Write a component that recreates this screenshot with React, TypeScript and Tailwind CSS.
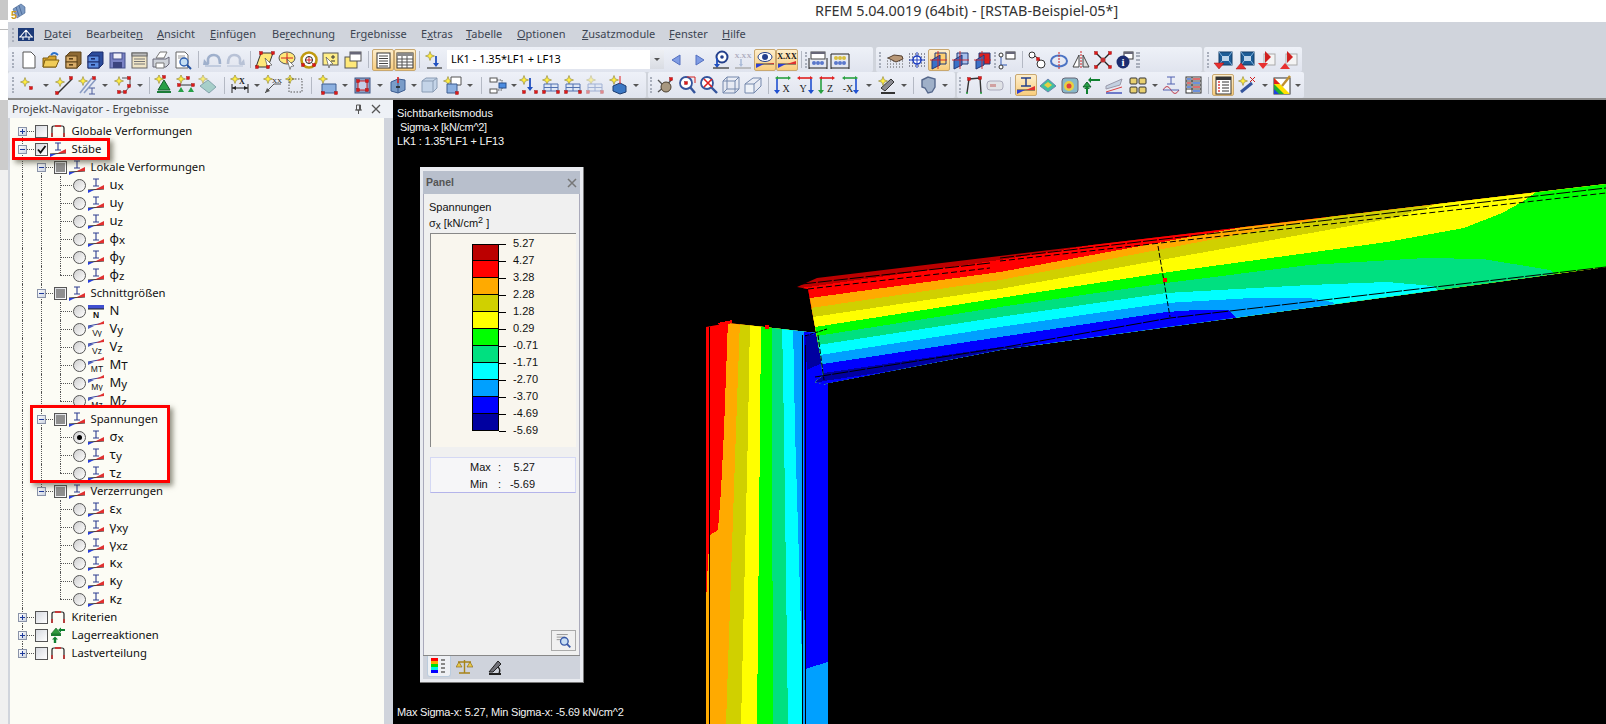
import type { ReactNode } from 'react';

const Sv = ({ c = 'w-[20px] h-[20px]', v = '0 0 20 20', children }: { c?: string; v?: string; children: ReactNode }) => (
  <svg viewBox={v} className={c} fill="none">
    {children}
  </svg>
);

// small bits shared by the toolbar drawings
const St = ({ x, y }: { x: number; y: number }) => (
  <path d={`M${x} ${y - 4.5}l1.2 3.3 3.3 1.2-3.3 1.2-1.2 3.3-1.2-3.3-3.3-1.2 3.3-1.2z`} fill="#ffee44" stroke="#8c8030" strokeWidth=".6" />
);
const Rd = ({ x, y }: { x: number; y: number }) => <rect x={x - 1.5} y={y - 1.5} width="3" height="3" fill="#e01818" stroke="#901010" strokeWidth=".4" />;
const Cab = ({ a, b, d }: { a: string; b: string; d: string }) => (
  <>
    <path d="M3 6l4-4h11v12l-4 4H3z" fill={a} stroke={d} />
    <rect x="3" y="6" width="11" height="6" fill={b} stroke={d} />
    <rect x="3" y="12" width="11" height="6" fill={b} stroke={d} />
    <rect x="6" y="8" width="4" height="1.6" fill={d} />
    <rect x="6" y="14" width="4" height="1.6" fill={d} />
  </>
);
// view direction icon: coloured arrow over the top, one vertical arrow, axis letter beside it
const Axis = ({ t, top, c, side }: { t: string; top: string; c: string; side: 'l' | 'r' }) => {
  const x = side === 'l' ? 4 : 16;
  return (
    <>
      <path d="M4 3h12" stroke={top} strokeWidth="1.6" />
      <path d="M2 3l3-2v4zM18 3l-3-2v4z" fill={top} />
      <path d={`M${x} 4v12`} stroke={c} strokeWidth="1.6" />
      <path d={`M${x} 19l-3-4h6z`} fill={c} />
      <text x={side === 'l' ? 13 : 8} y="17" textAnchor="middle" fontSize="10" fontFamily="Liberation Serif, serif" fill="#222">{t}</text>
    </>
  );
};
const Plane = ({ f }: { f: string }) => (
  <>
    <path d="M6 3h11v11H6z" fill={f} stroke="#203878" />
    <path d="M3 10l8-5v10l-8 4z" fill="#3a70c8" stroke="#203878" />
    <path d="M9 1v18M1 10h17" stroke="#d02020" strokeWidth=".9" />
  </>
);
const Blue = () => (
  <>
    <rect x="6" y="2" width="13" height="13" fill="#1c5c96" stroke="#123c66" />
    <rect x="9" y="6" width="7" height="5" fill="#bcd4ea" />
    <path d="M6 2l3 4M19 2l-3 4M6 15l3-4M19 15l-3-4" stroke="#7fb0dc" />
  </>
);
const House = ({ o = 1 }: { o?: number }) => (
  <g opacity={o}>
    <St x={6} y={5} />
    <path d="M3 9h14v7H3z" fill="#dfe7f5" stroke="#5070b0" />
    <path d="M3 12.5h14M10 9v7" stroke="#5070b0" />
    <Rd x={3} y={17} />
    <Rd x={17} y={17} />
  </g>
);

const ICONS: Record<string, ReactNode> = {
  new: <path d="M4 2h8l4 4v12H4z" fill="#fff" stroke="#555" />,
  open: (
    <>
      <path d="M2 8h5l1-2h7v11H2z" fill="#d8a52a" stroke="#7c5c10" />
      <path d="M4 10h14l-3 7H2z" fill="#f0cc58" stroke="#7c5c10" />
      <path d="M10 5q3-4 7 0" stroke="#2a70c8" strokeWidth="1.8" />
    </>
  ),
  cabA: <Cab a="#8e6a34" b="#d8ac68" d="#5c4218" />,
  cabB: <Cab a="#2c4c9c" b="#5c8ce0" d="#1c2c6c" />,
  save: (
    <>
      <rect x="3" y="3" width="15" height="15" fill="#7a82c4" stroke="#44508c" />
      <rect x="6" y="3" width="9" height="6" fill="#f0f0f8" stroke="#44508c" />
      <rect x="6" y="12" width="9" height="6" fill="#3c4480" />
    </>
  ),
  props: (
    <>
      <rect x="3" y="3" width="15" height="15" fill="#efe4c6" stroke="#666" />
      <rect x="3" y="3" width="15" height="3" fill="#bbb" stroke="#666" />
      <path d="M5 9h11M5 11.5h11M5 14h11" stroke="#777" />
    </>
  ),
  print: (
    <>
      <path d="M5 8l4-6h7l-3 6z" fill="#fff" stroke="#777" />
      <path d="M2 9h13l3-2v7l-3 3H2z" fill="#cfd3da" stroke="#667" />
      <path d="M5 13h8v5H5z" fill="#fff" stroke="#777" />
    </>
  ),
  preview: (
    <>
      <path d="M3 2h9l3 3v13H3z" fill="#fff" stroke="#666" />
      <path d="M5 6h7M5 8h7" stroke="#999" />
      <circle cx="11" cy="12" r="4" fill="#c4def4" stroke="#3060b0" strokeWidth="1.4" />
      <path d="M14 15l4 4" stroke="#2050a0" strokeWidth="2" />
    </>
  ),
  undo: (
    <>
      <path d="M5 14V9q1-4 6-4 6 0 6 9" stroke="#9fb0cc" strokeWidth="2.6" />
      <path d="M1 9l5 6h-6z" fill="#9fb0cc" />
      <path d="M2 16h16" stroke="#9fb0cc" />
    </>
  ),
  redo: (
    <>
      <path d="M15 14V9q-1-4-6-4-6 0-6 9" stroke="#b8c2d6" strokeWidth="2.6" />
      <path d="M19 9l-5 6h6z" fill="#b8c2d6" />
      <path d="M2 16h16" stroke="#b8c2d6" />
    </>
  ),
  para: (
    <>
      <path d="M6 3h12l-5 14H1z" fill="#ffe97a" stroke="#333" />
      <path d="M10 8l7 7-3 .5-1 3z" fill="#fff" stroke="#555" strokeWidth=".7" />
      <Rd x={6} y={3} />
      <Rd x={18} y={3} />
      <Rd x={2} y={17} />
      <Rd x={13} y={17} />
    </>
  ),
  sel1: (
    <>
      <ellipse cx="10" cy="8" rx="8" ry="6" fill="#ffe97a" stroke="#555" />
      <path d="M10 3v10M4 8h12" stroke="#d02020" />
      <path d="M10 9l7 7-3 .4-1 3z" fill="#fff" stroke="#555" strokeWidth=".7" />
    </>
  ),
  sel2: (
    <>
      <circle cx="10" cy="10" r="7.5" fill="#fff" stroke="#c09a10" strokeWidth="2.6" />
      <circle cx="10" cy="10" r="3.5" fill="#fff" stroke="#222" />
      <path d="M10 7v6M7 10h6" stroke="#d02020" />
      <Rd x={4} y={15} />
      <Rd x={15} y={15} />
    </>
  ),
  sel3: (
    <>
      <rect x="2" y="3" width="15" height="12" fill="#ffee88" stroke="#555" />
      <path d="M12 5v4M10 7h4M10 11h4" stroke="#333" />
      <path d="M5 7l7 7-3 .4-1 3.6z" fill="#fff" stroke="#555" strokeWidth=".7" />
    </>
  ),
  win: (
    <>
      <rect x="2" y="7" width="12" height="11" fill="#ffe97a" stroke="#555" />
      <rect x="7" y="2" width="11" height="9" fill="#fff" stroke="#555" />
      <rect x="7" y="2" width="11" height="2.5" fill="#667" />
    </>
  ),
  tog1: (
    <>
      <rect x="4" y="3" width="13" height="15" fill="#fff" stroke="#333" />
      <path d="M6 6h9M6 8.5h9M6 11h9M6 13.5h9M6 16h9" stroke="#444" />
    </>
  ),
  tog2: (
    <>
      <rect x="2" y="3" width="16" height="15" fill="#fff" stroke="#333" />
      <rect x="2" y="3" width="16" height="3" fill="#8a8a8a" />
      <path d="M2 9h16M2 12h16M2 15h16M7 6v12M12 6v12" stroke="#555" />
    </>
  ),
  load: (
    <>
      <St x={6} y={6} />
      <path d="M12 6v9" stroke="#2050c0" strokeWidth="1.8" />
      <path d="M12 17l-3-4h6z" fill="#2050c0" />
      <path d="M3 18h15" stroke="#555" strokeWidth="1.4" />
    </>
  ),
  prevA: <path d="M5 10l8-5v10z" fill="#7f9ce4" stroke="#5470c0" />,
  nextA: <path d="M15 10l-8-5v10z" fill="#7f9ce4" stroke="#5470c0" />,
  pin: (
    <>
      <circle cx="11" cy="7" r="5.5" fill="#fff" stroke="#24408c" strokeWidth="2" />
      <circle cx="11" cy="7" r="1.8" fill="#24408c" />
      <path d="M6 8v8" stroke="#2050c0" strokeWidth="1.8" />
      <path d="M6 18l-3-4h6z" fill="#2050c0" />
      <path d="M2 18h16" stroke="#444" strokeWidth="1.4" />
    </>
  ),
  xxx: (
    <>
      <text x="10" y="8" textAnchor="middle" fontSize="7" fontWeight="700" fontFamily="Liberation Serif, serif" fill="#aab">X.XX</text>
      <path d="M8 9v6" stroke="#aabbd8" strokeWidth="1.6" />
      <path d="M8 17l-2-3h4z" fill="#aabbd8" />
      <path d="M2 18h16" stroke="#aaa" strokeWidth="1.4" />
    </>
  ),
  eye: (
    <>
      <ellipse cx="10" cy="7" rx="7" ry="4.5" fill="#fff" stroke="#24408c" />
      <circle cx="10" cy="7" r="3" fill="#24408c" />
      <path d="M1 14h18" stroke="#333" />
      <path d="M1 14h18v-1l-8 1z" fill="#e03030" />
      <path d="M1 14h8l-8 4z" fill="#3040d0" />
    </>
  ),
  xxxA: (
    <>
      <text x="10" y="9" textAnchor="middle" fontSize="8" fontWeight="700" fontFamily="Liberation Serif, serif" fill="#111">X.XX</text>
      <path d="M1 14h18" stroke="#333" />
      <path d="M10 14l9-3v3z" fill="#e03030" />
      <path d="M1 14h8l-8 4z" fill="#3040d0" />
    </>
  ),
  glasses: (
    <>
      <path d="M2 6l5 8M18 4l-3 10" stroke="#667a9c" strokeWidth="1.6" />
      <circle cx="6" cy="12" r="3.6" fill="#9fb4d0" stroke="#4c5f80" />
      <circle cx="14" cy="12" r="3.6" fill="#9fb4d0" stroke="#4c5f80" />
    </>
  ),
  abac1: (
    <>
      <rect x="3" y="2" width="14" height="7" fill="#fff" stroke="#444" />
      <rect x="3" y="2" width="14" height="2" fill="#667" />
      <path d="M1 8v11M19 8v11M1 18h18" stroke="#222" />
      <circle cx="6" cy="13" r="2" fill="#5a78cc" />
      <circle cx="10" cy="13" r="2" fill="#5a78cc" />
      <circle cx="14" cy="13" r="2" fill="#5a78cc" />
    </>
  ),
  abac2: (
    <>
      <path d="M1 4v15M19 4v15M1 18h18M1 4h18" stroke="#222" />
      <circle cx="6" cy="8" r="2" fill="#d8c040" />
      <circle cx="10" cy="8" r="2" fill="#d8c040" />
      <circle cx="14" cy="8" r="2" fill="#d8c040" />
      <circle cx="6" cy="13" r="2" fill="#5a78cc" />
      <circle cx="10" cy="13" r="2" fill="#5a78cc" />
      <circle cx="14" cy="13" r="2" fill="#5a78cc" />
    </>
  ),
  hand: (
    <>
      <path d="M2 8h16M2 11h16M2 14h16M2 17h16" stroke="#555" strokeDasharray="1 2" />
      <path d="M3 8l6-3 8 1 1 3-7 3z" fill="#b89878" stroke="#554030" />
    </>
  ),
  dots: (
    <>
      <path d="M2 4h16M2 7h16M2 10h16M2 13h16M2 16h16" stroke="#334" strokeDasharray="1 2" />
      <circle cx="10" cy="10" r="4" fill="#fff" stroke="#2040c0" strokeWidth="1.6" />
      <path d="M10 2v16M2 10h16" stroke="#2040c0" />
    </>
  ),
  act: <Plane f="#ffd070" />,
  pl2: <Plane f="#a8c0ec" />,
  pl3: <Plane f="#e02020" />,
  grid: (
    <>
      <path d="M4 18V8l5-5h7v15z" fill="#dfe7f5" stroke="#8a9cc0" />
      <path d="M4 12h12M4 15h12M8 6v12M12 4v14" stroke="#8a9cc0" />
      <circle cx="9" cy="11" r="1" fill="#d02020" />
      <circle cx="13" cy="14" r="1" fill="#d02020" />
    </>
  ),
  flow: (
    <>
      <rect x="9" y="2" width="9" height="7" fill="#fff" stroke="#333" />
      <rect x="9" y="2" width="9" height="2" fill="#667" />
      <path d="M4 7v8h6" stroke="#6a86c8" strokeWidth="1.4" />
      <circle cx="4" cy="5" r="2" fill="#fff" stroke="#333" />
      <circle cx="4" cy="17" r="2" fill="#fff" stroke="#333" />
    </>
  ),
  nodes: (
    <>
      <circle cx="5" cy="5" r="3" fill="#fff" stroke="#333" />
      <circle cx="14" cy="14" r="4" fill="#fff" stroke="#333" />
      <path d="M8 6l5 4" stroke="#333" />
      <Rd x={11} y={9} />
    </>
  ),
  rot: (
    <>
      <ellipse cx="10" cy="11" rx="8" ry="5.5" stroke="#4c74c4" strokeWidth="2" />
      <path d="M10 2v17" stroke="#d02020" strokeDasharray="2 1" />
    </>
  ),
  mirror: (
    <>
      <path d="M8 5v12H2z" fill="#fff" stroke="#444" />
      <path d="M12 5v12h6z" fill="#ddd" stroke="#444" />
      <path d="M10 1v18" stroke="#d02020" strokeDasharray="2 1" />
    </>
  ),
  cross: (
    <>
      <path d="M3 3l14 14M17 3L3 17" stroke="#222" strokeWidth="1.4" />
      <circle cx="10" cy="10" r="2.5" fill="#c03030" />
      <Rd x={3} y={3} />
      <Rd x={17} y={3} />
      <Rd x={3} y={17} />
      <Rd x={17} y={17} />
    </>
  ),
  info: (
    <>
      <rect x="9" y="2" width="9" height="7" fill="#fff" stroke="#333" />
      <rect x="9" y="2" width="9" height="2" fill="#667" />
      <circle cx="8" cy="12" r="6.5" fill="#1c2c70" />
      <text x="8" y="16" textAnchor="middle" fontSize="11" fontWeight="700" fontFamily="Liberation Serif, serif" fill="#fff">i</text>
    </>
  ),
  geard: (
    <>
      <rect x="3" y="3" width="15" height="15" fill="#efe4c6" stroke="#555" />
      <rect x="3" y="3" width="6" height="3" fill="#bbb" stroke="#555" />
      <circle cx="10.5" cy="11" r="4" fill="#3c64a8" stroke="#1c2c60" strokeWidth="1.4" />
      <circle cx="10.5" cy="11" r="1.4" fill="#fff" />
    </>
  ),
  gears: (
    <>
      <circle cx="6" cy="11" r="3" fill="#fff" stroke="#3050a0" strokeWidth="2" />
      <circle cx="14" cy="7" r="3" fill="#fff" stroke="#3050a0" strokeWidth="2" />
      <circle cx="12" cy="15" r="2.4" fill="#fff" stroke="#3050a0" strokeWidth="1.8" />
    </>
  ),
  dn1: (
    <>
      <Blue />
      <path d="M1 13h10l-5 6z" fill="#e83030" stroke="#a01010" strokeWidth=".5" />
    </>
  ),
  dn2: (
    <>
      <Blue />
      <path d="M1 19h10l-5-6z" fill="#e83030" stroke="#a01010" strokeWidth=".5" />
    </>
  ),
  flag1: (
    <>
      <rect x="7" y="4" width="11" height="11" fill="#f4f4f4" stroke="#aaa" />
      <path d="M8 1v12l6-6z" fill="#d02020" />
      <path d="M1 13h10l-5 6z" fill="#e83030" />
    </>
  ),
  flag2: (
    <>
      <rect x="7" y="4" width="11" height="11" fill="#f4f4f4" stroke="#aaa" />
      <path d="M8 1v12l6-6z" fill="#d02020" />
      <path d="M1 19h10l-5-6z" fill="#e83030" />
    </>
  ),
  s1: (
    <>
      <St x={7} y={7} />
      <Rd x={13} y={13} />
    </>
  ),
  s2: (
    <>
      <St x={6} y={7} />
      <path d="M3 19L18 4" stroke="#333" strokeWidth="1.4" />
      <Rd x={17} y={3} />
      <Rd x={3} y={18} />
    </>
  ),
  s3: (
    <>
      <St x={5} y={6} />
      <path d="M2 18L14 3M6 18L18 4" stroke="#8a9cc4" strokeWidth="1.6" />
      <Rd x={16} y={3} />
      <path d="M11 13h6M14 13v6M11 19h6" stroke="#4c5c9c" />
    </>
  ),
  s4: (
    <>
      <St x={6} y={6} />
      <path d="M9 3h8v8l-5 6H6" stroke="#555" />
      <Rd x={16} y={3} />
      <Rd x={16} y={11} />
      <Rd x={12} y={17} />
      <Rd x={6} y={17} />
    </>
  ),
  s5: (
    <>
      <Rd x={10} y={2} />
      <St x={5} y={4} />
      <path d="M10 5l6 10H4z" fill="#28a048" stroke="#14602c" />
      <path d="M3 16h14v2H3z" fill="#1c7c38" />
    </>
  ),
  s6: (
    <>
      <St x={5} y={4} />
      <Rd x={12} y={3} />
      <path d="M3 10h14" stroke="#333" />
      <Rd x={3} y={10} />
      <Rd x={17} y={10} />
      <path d="M5 12l3 5H2zM15 12l3 5h-6z" fill="#28a048" />
    </>
  ),
  s7: (
    <g opacity=".7">
      <St x={5} y={4} />
      <path d="M2 11l8-6 8 7-7 6z" fill="#8cc4b8" stroke="#5c8890" />
    </g>
  ),
  dim: (
    <>
      <St x={5} y={4} />
      <path d="M2 9v9M18 9v9M2 13h16" stroke="#222" />
      <path d="M2 13l4-2v4zM18 13l-4-2v4z" fill="#222" />
      <text x="12" y="9" textAnchor="middle" fontSize="8" fontWeight="700" fontFamily="Liberation Serif, serif" fill="#222">X</text>
    </>
  ),
  dimx: (
    <>
      <St x={5} y={4} />
      <path d="M2 18L11 9h7" stroke="#555" />
      <path d="M2 18l2-5 3 3z" fill="#555" />
      <text x="14" y="8" textAnchor="middle" fontSize="7" fontFamily="Liberation Serif, serif" fill="#222">XX</text>
    </>
  ),
  dimbox: (
    <>
      <St x={5} y={4} />
      <rect x="4" y="4" width="13" height="13" stroke="#555" strokeDasharray="1.5 1.5" />
    </>
  ),
  rect: (
    <>
      <St x={5} y={4} />
      <path d="M4 9h14v9H4z" fill="#8cb0e0" stroke="#3c5c90" />
      <Rd x={5} y={18} />
      <Rd x={18} y={18} />
    </>
  ),
  frame2: (
    <>
      <rect x="3" y="3" width="15" height="15" fill="#8ca0c4" stroke="#3c5484" />
      <rect x="6" y="6" width="9" height="9" fill="#c4d0e8" stroke="#d02020" />
      <Rd x={6} y={6} />
      <Rd x={15} y={6} />
      <Rd x={6} y={15} />
      <Rd x={15} y={15} />
    </>
  ),
  solid: (
    <>
      <path d="M3 7l7-3 7 1v10l-7 3-7-2z" fill="#7a9cc8" stroke="#3c5c90" />
      <path d="M10 4v14" stroke="#3c5c90" />
      <path d="M10 2v6" stroke="#e02020" strokeWidth="1.6" />
      <path d="M8 12h4" stroke="#222" strokeWidth="1.6" />
    </>
  ),
  cube: (
    <>
      <path d="M3 6l4-3h11v10l-4 4H3z" fill="#c4d4e8" stroke="#8a9cb4" />
      <path d="M3 6h11v11M14 6l4-3" stroke="#8a9cb4" />
    </>
  ),
  cube2: (
    <>
      <St x={5} y={6} />
      <path d="M8 2h10v8H8z" fill="#fff" stroke="#555" />
      <path d="M4 9h10v9H4z" fill="#8cb0e0" stroke="#3c5c90" />
      <Rd x={14} y={18} />
    </>
  ),
  arr: (
    <>
      <rect x="2" y="3" width="7" height="4" fill="#fff" stroke="#555" />
      <rect x="2" y="14" width="7" height="4" fill="#fff" stroke="#555" />
      <path d="M9 5h5v10H9" stroke="#555" strokeDasharray="1.5 1" />
      <rect x="11" y="8" width="7" height="5" fill="#4c8ce0" stroke="#28508c" />
    </>
  ),
  down: (
    <>
      <St x={5} y={5} />
      <path d="M11 3v10" stroke="#2050c0" strokeWidth="1.8" />
      <path d="M11 16l-3-4h6z" fill="#2050c0" />
      <Rd x={5} y={17} />
      <Rd x={17} y={17} />
    </>
  ),
  h1: <House />,
  h2: <House />,
  h3: <House o={0.45} />,
  bolt: (
    <>
      <St x={6} y={5} />
      <path d="M5 11l7-3 6 3v6l-6 2-7-3z" fill="#3c78c4" stroke="#1c3c70" />
      <path d="M12 1v8" stroke="#e02020" />
    </>
  ),
  hand2: (
    <>
      <path d="M3 5l6 6M17 4l-6 7M3 17l6-5" stroke="#555" strokeWidth="1.4" />
      <circle cx="11" cy="12" r="5" fill="#a89880" stroke="#4c4030" />
      <Rd x={16} y={4} />
    </>
  ),
  zoomAdd: (
    <>
      <circle cx="9" cy="8" r="6" fill="#fff" stroke="#34549c" strokeWidth="1.8" />
      <path d="M13 12l5 6" stroke="#34549c" strokeWidth="2.4" />
      <path d="M10 2h8v6" stroke="#d02020" />
      <Rd x={9} y={8} />
    </>
  ),
  zoomX: (
    <>
      <circle cx="8" cy="8" r="6" fill="#fff" stroke="#34549c" strokeWidth="1.8" />
      <path d="M12 12l6 6" stroke="#34549c" strokeWidth="2.4" />
      <path d="M5 4l8 8M13 4l-8 8" stroke="#e02020" strokeWidth="1.6" />
    </>
  ),
  wire: <path d="M2 6l4-4h12v12l-4 4H2zM2 6h12v12M14 6l4-4M6 2v12l-4 4M6 14h12" stroke="#7488ac" />,
  iso: (
    <>
      <path d="M2 9h9v9H2z" fill="#eef2f8" stroke="#7488ac" />
      <path d="M2 9l8-6h8v8l-7 7M11 9l7-6" stroke="#7488ac" />
    </>
  ),
  vx: <Axis t="X" top="#28a040" c="#2050d0" side="l" />,
  vy: <Axis t="Y" top="#e02020" c="#2050d0" side="r" />,
  vz: <Axis t="Z" top="#e02020" c="#28a040" side="l" />,
  vmx: <Axis t="-X" top="#28a040" c="#2050d0" side="r" />,
  scope: (
    <>
      <path d="M3 13l10-9 3 3-9 9z" fill="#8a8a90" stroke="#333" />
      <path d="M3 18h14" stroke="#333" strokeWidth="2" />
      <St x={5} y={6} />
    </>
  ),
  shape: <path d="M3 5l6-3 7 2v8l-3 5-4 1-3-5-3-1z" fill="#9fb0c8" stroke="#56688c" strokeWidth="1.4" />,
  frameS: (
    <>
      <path d="M4 18L6 4l11-1 1 15" stroke="#333" strokeWidth="1.4" />
      <path d="M3 18h2M17 18h2" stroke="#28a040" strokeWidth="1.6" />
      <Rd x={6} y={4} />
      <Rd x={17} y={3} />
    </>
  ),
  pill: (
    <>
      <rect x="2" y="6" width="16" height="9" rx="3" fill="#e0e2e6" stroke="#aab" />
      <rect x="5" y="9" width="6" height="3" fill="#d0a0a0" />
    </>
  ),
  mem: (
    <>
      <path d="M5 3h10M5 11h10M10 3v8" stroke="#24408c" strokeWidth="1.5" />
      <path d="M1 15h18" stroke="#333" />
      <path d="M10 15l9-4v4z" fill="#e03030" />
      <path d="M1 15h8l-8 4z" fill="#3040d0" />
    </>
  ),
  surf: (
    <>
      <path d="M2 11l8-7 8 7-8 6z" fill="#40c0a0" stroke="#6a84b0" />
      <path d="M6 10l4-3 4 3-4 3z" fill="#e8d040" />
    </>
  ),
  colC: (
    <>
      <rect x="2" y="3" width="16" height="15" rx="3" fill="#88b8c8" stroke="#667" />
      <circle cx="9" cy="11" r="5" fill="#e8d040" />
      <circle cx="9" cy="11" r="2.5" fill="#e04040" />
    </>
  ),
  sup: (
    <>
      <path d="M5 7l4 5H1z" fill="#28a048" stroke="#14602c" />
      <path d="M9 5h9M5 14v5" stroke="#108030" strokeWidth="2" />
      <path d="M9 2l-3 3 3 3zM2 14h6l-3-3z" fill="#108030" />
    </>
  ),
  slope: (
    <>
      <path d="M2 11L18 4l-2 6L2 14z" fill="#c4d0e0" stroke="#99a" />
      <path d="M2 18h16" stroke="#5060c0" strokeWidth="1.6" />
      <path d="M2 17l16-5" stroke="#e04040" />
    </>
  ),
  squares: (
    <>
      <rect x="2" y="3" width="7" height="6" rx="1" fill="#e8d070" stroke="#333" />
      <rect x="11" y="3" width="7" height="6" rx="1" fill="#e8d070" stroke="#333" />
      <rect x="2" y="12" width="7" height="6" rx="1" fill="#e8d070" stroke="#333" />
      <rect x="11" y="12" width="7" height="6" rx="1" fill="#e8d070" stroke="#333" />
    </>
  ),
  wave: (
    <>
      <path d="M6 2h8M6 9h8M10 2v7" stroke="#5060b0" />
      <path d="M2 15q4-7 8 0t8 0" stroke="#c04050" />
      <path d="M2 15h16" stroke="#5060b0" />
    </>
  ),
  table: (
    <>
      <rect x="3" y="2" width="15" height="16" fill="#fff" stroke="#333" />
      <path d="M3 6h15M3 10h15M3 14h15M9 2v16" stroke="#333" />
      <path d="M4 4h4M10 8h7M4 12h4M10 16h7" stroke="#3c6cd0" strokeWidth="1.6" />
      <path d="M10 4h7M4 8h4M10 12h7" stroke="#d04040" strokeWidth="1.6" />
    </>
  ),
  list: (
    <>
      <rect x="3" y="2" width="15" height="17" fill="#fff" stroke="#333" />
      <rect x="3" y="2" width="15" height="3" fill="#333" />
      <path d="M5 7h2M5 10h2M5 13h2M5 16h2" stroke="#e04040" strokeWidth="1.6" />
      <path d="M9 7h7M9 10h7M9 13h7M9 16h7" stroke="#333" />
    </>
  ),
  wand: (
    <>
      <St x={6} y={6} />
      <path d="M4 17L15 8" stroke="#34549c" strokeWidth="3" />
      <path d="M13 2l5 5M18 2l-5 5" stroke="#d02020" />
    </>
  ),
  color: (
    <>
      <rect x="2" y="3" width="16" height="16" fill="#fff" stroke="#333" />
      <path d="M2 3l16 16H2z" fill="#ffe000" />
      <path d="M2 9l10 10H2z" fill="#20b030" />
      <path d="M2 14l5 5H2z" fill="#2040e0" />
      <path d="M2 3l6 6-6 0z" fill="#e02020" />
      <path d="M18 1L10 11" stroke="#c09030" strokeWidth="2.4" />
    </>
  ),
};

const W: Record<string, string> = {
  '1': 'w-px',
  '2': 'w-[2px]',
  '5': 'w-[5px]',
  '6': 'w-[6px]',
  '7': 'w-[7px]',
  '8': 'w-[8px]',
  '9': 'w-[9px]',
  '10': 'w-[10px]',
  '11': 'w-[11px]',
  '12': 'w-[12px]',
  '13': 'w-[13px]',
  '14': 'w-[14px]',
  '16': 'w-[16px]',
};

const Tok = ({ t }: { t: string }) => {
  const head = t[0];
  const rest = t.slice(1);
  if (t === 'combo')
    return (
      <div className="ml-[2px] mr-[2px] flex h-[19px] w-[217px] shrink-0 items-center bg-white">
        <span className="flex-1 pl-[4px] text-[11px] text-black [font-family:'Noto_Sans',sans-serif]">LK1 - 1.35*LF1 + LF13</span>
        <span className="flex h-full w-[14px] items-center justify-center bg-gradient-to-b from-[#eef0f4] to-[#d9dce3]">
          <span className="h-0 w-0 border-x-[3px] border-t-[3px] border-x-transparent border-t-[#555]" />
        </span>
      </div>
    );
  if (head === 'g')
    return (
      <div className={`flex h-full shrink-0 items-center justify-center ${W[rest]}`}>
        <span className="h-[16px] border-l-2 border-dotted border-[#a8aebb]" />
      </div>
    );
  if (head === '|')
    return (
      <div className={`flex h-full shrink-0 items-center justify-center ${W[rest]}`}>
        <span className="h-[17px] w-px bg-[#b4b9c4]" />
      </div>
    );
  if (head === '_') return <div className={`shrink-0 ${W[rest]}`} />;
  if (/^v\d/.test(t))
    return (
      <div className={`flex h-full shrink-0 items-center justify-center ${W[rest]}`}>
        <span className="h-0 w-0 border-x-[3px] border-t-[3px] border-x-transparent border-t-[#555]" />
      </div>
    );
  if (head === '*')
    return (
      <div className="flex h-[22px] w-[22px] shrink-0 items-center justify-center rounded-[2px] border border-[#c9a870] bg-gradient-to-b from-[#fdeecb] to-[#f9cd7c]">
        <Sv>{ICONS[rest]}</Sv>
      </div>
    );
  return (
    <div className="flex h-[22px] w-[22px] shrink-0 items-center justify-center">
      <Sv>{ICONS[t]}</Sv>
    </div>
  );
};

const Bar = ({ c, items }: { c: string; items: string }) => (
  <div className={`flex h-full shrink-0 items-center rounded-[2px] bg-gradient-to-b from-[#eef1f8] to-[#e0e4ee] ${c}`}>
    {items.split(' ').map((t, i) => (
      <Tok key={i} t={t} />
    ))}
  </div>
);

const MENU: [string, string, string, string][] = [
  ['', 'D', 'atei', 'w-[42px]'],
  ['Bearbeite', 'n', '', 'w-[71px]'],
  ['', 'A', 'nsicht', 'w-[53px]'],
  ['', 'E', 'infügen', 'w-[62px]'],
  ['Be', 'r', 'echnung', 'w-[78px]'],
  ['Er', 'g', 'ebnisse', 'w-[71px]'],
  ['E', 'x', 'tras', 'w-[45px]'],
  ['', 'T', 'abelle', 'w-[51px]'],
  ['', 'O', 'ptionen', 'w-[65px]'],
  ['', 'Z', 'usatzmodule', 'w-[87px]'],
  ['', 'F', 'enster', 'w-[53px]'],
  ['', 'H', 'ilfe', 'w-[40px]'],
];

// tree icons
const MemberIcon = () => (
  <Sv c="w-[16px] h-[16px]" v="0 0 16 16">
    <path d="M5 2h6M5 9h6M8 2v7" stroke="#2c3c90" strokeWidth="1.1" />
    <path d="M0 13l16-1" stroke="#333" strokeWidth="1" />
    <path d="M7 12.5L16 8v4z" fill="#e03030" />
    <path d="M0 13h6l-6 3z" fill="#2a40d8" />
  </Sv>
);
const FrameIcon = () => (
  <Sv c="w-[16px] h-[16px]" v="0 0 16 16">
    <path d="M2 14V5q0-2 2-2h8q2 0 2 2v9" stroke="#222" strokeWidth="1.2" />
    <path d="M2 10v4M14 10v4M5 3h6" stroke="#d82020" strokeWidth="1.3" />
  </Sv>
);
const ForceIcon = ({ t }: { t: string }) => (
  <Sv c="w-[16px] h-[16px]" v="0 0 16 16">
    <path d="M0 5L16 2" stroke="#3040a0" strokeWidth="1" />
    <path d="M8 4L16 0v3z" fill="#e03030" />
    <path d="M0 5h6L0 8z" fill="#5060c0" />
    <text x="9" y="14.5" textAnchor="middle" fontSize="8.5" fontFamily="Liberation Sans, sans-serif" fill="#111">{t}</text>
  </Sv>
);
const NIcon = () => (
  <Sv c="w-[16px] h-[16px]" v="0 0 16 16">
    <rect x="0" y="2" width="16" height="4" fill="#4050d0" />
    <path d="M0 6h16" stroke="#222" />
    <text x="8" y="15" textAnchor="middle" fontSize="8.5" fontWeight="700" fontFamily="Liberation Sans, sans-serif" fill="#111">N</text>
  </Sv>
);
const SupportIcon = () => (
  <Sv c="w-[16px] h-[16px]" v="0 0 16 16">
    <path d="M6 1l5 6H1z" fill="#2f9a3c" stroke="#166028" strokeWidth=".6" />
    <path d="M1 7h10v2H1z" fill="#1c7c30" />
    <path d="M10 3h5" stroke="#108030" strokeWidth="2" />
    <path d="M11 .5L8 3l3 2.5z" fill="#108030" />
    <path d="M5 12v4" stroke="#108030" strokeWidth="2.4" />
    <path d="M2 12.5h6L5 9.5z" fill="#108030" />
  </Sv>
);

type RowDef = {
  lvl: 0 | 1 | 2;
  label: ReactNode;
  icon: ReactNode;
  plus?: boolean;
  state?: 'off' | 'on' | 'mixed' | 'dot';
  b?: 'full' | 'down' | 'up' | 'none';
  lastChild?: boolean;
};

const Sub = ({ a, b }: { a: string; b: string }) => (
  <span className="relative top-[-1px] text-[13px]">
    {a}
    <span className="relative top-[1px] text-[11.5px]">{b}</span>
  </span>
);
const M = <MemberIcon />;
const kids = (list: [string, string][], icons?: ReactNode[], b: RowDef['b'] = 'full', dot = -1): RowDef[] =>
  list.map(([x, y], i) => ({
    lvl: 2,
    label: <Sub a={x} b={y} />,
    icon: icons ? icons[i] : M,
    b,
    lastChild: i === list.length - 1,
    state: i === dot ? 'dot' : 'off',
  }));

const ROWS: RowDef[] = [
  { lvl: 0, label: 'Globale Verformungen', icon: <FrameIcon />, plus: true, state: 'off' },
  { lvl: 0, label: 'Stäbe', icon: M, state: 'on' },
  { lvl: 1, label: 'Lokale Verformungen', icon: M, state: 'mixed', b: 'down' },
  ...kids([['u', 'x'], ['u', 'y'], ['u', 'z'], ['φ', 'x'], ['φ', 'y'], ['φ', 'z']]),
  { lvl: 1, label: 'Schnittgrößen', icon: M, state: 'mixed', b: 'full' },
  ...kids(
    [['N', ''], ['V', 'y'], ['V', 'z'], ['M', 'T'], ['M', 'y'], ['M', 'z']],
    [<NIcon />, <ForceIcon t="Vy" />, <ForceIcon t="Vz" />, <ForceIcon t="MT" />, <ForceIcon t="My" />, <ForceIcon t="Mz" />],
  ),
  { lvl: 1, label: 'Spannungen', icon: M, state: 'mixed', b: 'full' },
  ...kids([['σ', 'x'], ['τ', 'y'], ['τ', 'z']], undefined, 'full', 0),
  { lvl: 1, label: 'Verzerrungen', icon: M, state: 'mixed', b: 'up' },
  ...kids([['ε', 'x'], ['γ', 'xy'], ['γ', 'xz'], ['κ', 'x'], ['κ', 'y'], ['κ', 'z']], undefined, 'none'),
  { lvl: 0, label: 'Kriterien', icon: <FrameIcon />, plus: true, state: 'off' },
  { lvl: 0, label: 'Lagerreaktionen', icon: <SupportIcon />, plus: true, state: 'off' },
  { lvl: 0, label: 'Lastverteilung', icon: <FrameIcon />, plus: true, state: 'off' },
];

const VLine = ({ m }: { m: 'full' | 'down' | 'up' }) => (
  <span
    className={
      m === 'full'
        ? 'absolute left-[9px] top-0 h-[18px] border-l border-dotted border-[#555]'
        : m === 'down'
          ? 'absolute left-[9px] top-[9px] h-[9px] border-l border-dotted border-[#555]'
          : 'absolute left-[9px] top-0 h-[9px] border-l border-dotted border-[#555]'
    }
  />
);
const HLine = () => <span className="absolute left-[9px] top-[9px] w-[12px] border-t border-dotted border-[#555]" />;
const Expander = ({ plus }: { plus?: boolean }) => (
  <span className="absolute left-[5px] top-[5px] flex h-[9px] w-[9px] items-center justify-center border border-[#8a93a8] bg-gradient-to-br from-white to-[#ccd3e0]">
    <span className="relative block h-px w-[5px] bg-[#1e3a9a]">
      {plus && <span className="absolute left-[2px] top-[-2px] block h-[5px] w-px bg-[#1e3a9a]" />}
    </span>
  </span>
);

const TreeRow = ({ r, i }: { r: RowDef; i: number }) => {
  const aMode = i === 0 ? 'down' : i === ROWS.length - 1 ? 'up' : 'full';
  return (
    <div className="flex h-[18px] items-center">
      <div className="relative h-[18px] w-[19px] shrink-0">
        <VLine m={aMode} />
        {r.lvl === 0 && (
          <>
            <HLine />
            <Expander plus={r.plus} />
          </>
        )}
      </div>
      {r.lvl > 0 && (
        <div className="relative h-[18px] w-[19px] shrink-0">
          {r.b && r.b !== 'none' && <VLine m={r.b} />}
          {r.lvl === 1 && (
            <>
              <HLine />
              <Expander />
            </>
          )}
        </div>
      )}
      {r.lvl === 2 && (
        <div className="relative h-[18px] w-[19px] shrink-0">
          <VLine m={r.lastChild ? 'up' : 'full'} />
          <HLine />
        </div>
      )}
      <div className="ml-[3px] flex w-[14px] shrink-0 items-center">
        {r.lvl === 2 ? (
          <span className="flex h-[13px] w-[13px] items-center justify-center rounded-full border border-[#555] bg-gradient-to-br from-[#cfcfcf] to-white">
            {r.state === 'dot' && <span className="h-[5px] w-[5px] rounded-full bg-black" />}
          </span>
        ) : (
          <span className="flex h-[13px] w-[13px] items-center justify-center border border-[#555] bg-gradient-to-br from-[#d6d9df] to-white">
            {r.state === 'mixed' && <span className="h-[9px] w-[9px] bg-[#8f8f8f]" />}
            {r.state === 'on' && (
              <Sv c="w-[11px] h-[11px]" v="0 0 11 11">
                <path d="M2 5.5l2.5 3L9.5 2" stroke="#111" strokeWidth="1.8" />
              </Sv>
            )}
          </span>
        )}
      </div>
      <div className="ml-[1px] flex h-[16px] w-[16px] shrink-0 items-center">{r.icon}</div>
      <div className="ml-[6px] whitespace-nowrap text-[11.25px] leading-[18px] text-[#111] [font-family:'Noto_Sans',sans-serif]">{r.label}</div>
    </div>
  );
};

const LEGEND: [string, string][] = [
  ['5.27', 'h-[17px] bg-[#bb0000] border border-black'],
  ['4.27', 'h-[17px] bg-[#ff0000] border border-t-0 border-black'],
  ['3.28', 'h-[17px] bg-[#ffaa00] border border-t-0 border-black'],
  ['2.28', 'h-[17px] bg-[#d0d000] border border-t-0 border-black'],
  ['1.28', 'h-[17px] bg-[#ffff00] border border-t-0 border-black'],
  ['0.29', 'h-[17px] bg-[#00ff00] border border-t-0 border-black'],
  ['-0.71', 'h-[17px] bg-[#00e080] border border-t-0 border-black'],
  ['-1.71', 'h-[17px] bg-[#00ffff] border border-t-0 border-black'],
  ['-2.70', 'h-[17px] bg-[#00a0ff] border border-t-0 border-black'],
  ['-3.70', 'h-[17px] bg-[#0000ff] border border-t-0 border-black'],
  ['-4.69', 'h-[17px] bg-[#0000a0] border border-t-0 border-black'],
  ['-5.69', 'h-0'],
];

const Panel = () => (
  <div className="absolute left-[27px] top-[67px] flex h-[516px] w-[164px] flex-col border-b border-r border-[#777] bg-[#e9ebf0] px-[3px] pb-[3px] pt-[4px] [font-family:'Liberation_Sans',sans-serif]">
    <div className="flex h-[23px] shrink-0 items-center justify-between bg-[#b8bfcc] pl-[3px] pr-[3px]">
      <span className="text-[10.5px] font-bold text-[#555]">Panel</span>
      <Sv c="w-[10px] h-[10px]" v="0 0 10 10">
        <path d="M1 1l8 8M9 1L1 9" stroke="#777" strokeWidth="1.5" />
      </Sv>
    </div>
    <div className="flex flex-1 flex-col border-x border-[#aab] bg-[#f0f0f0] pl-[6px] pr-[3px]">
      <div className="-ml-px mt-[5px] h-[16px] text-[11px] leading-[16px] text-[#111]">Spannungen</div>
      <div className="-ml-px h-[16px] text-[11px] leading-[16px] text-[#111]">
        <span className="text-[#222]">σ</span>
        <span className="relative top-[2px] text-[10px]">x</span> [kN/cm<sup className="text-[9px]">2</sup> ]
      </div>
      <div className="mt-[2px] h-[214px] shrink-0 border-l border-t border-[#888] bg-[#f9f6ee] pl-[41px] pt-[10px]">
        {LEGEND.map(([v, cls]) => (
          <div key={v} className="flex h-[17px] items-start">
            <div className={`w-[27px] ${cls}`} />
            <div className="mt-0 h-px w-[7px] bg-black" />
            <div className="ml-[7px] mt-[-8px] text-[11px] leading-[14px] text-[#111]">{v}</div>
          </div>
        ))}
      </div>
      <div className="mt-[10px] h-[36px] shrink-0 border border-[#d4d8f4] border-b-[#b4b4ea] bg-[#f6f6f8] text-[11px] leading-[17px] text-[#111]">
        <div className="flex pl-[39px] pt-px">
          <span className="w-[28px]">Max</span>
          <span className="w-[8px]">:</span>
          <span className="w-[29px] text-right">5.27</span>
        </div>
        <div className="flex pl-[39px]">
          <span className="w-[28px]">Min</span>
          <span className="w-[8px]">:</span>
          <span className="w-[29px] text-right">-5.69</span>
        </div>
      </div>
      <div className="flex flex-1 items-end justify-end pb-[4px]">
        <div className="flex h-[21px] w-[25px] items-center justify-center border border-[#aaa] bg-[#f0f0f0]">
          <Sv c="w-[17px] h-[17px]">
            <path d="M2 3h13M2 6h10M2 9h6" stroke="#888" />
            <circle cx="11" cy="11" r="4.5" fill="#c8def4" stroke="#3858a8" strokeWidth="1.6" />
            <path d="M14 14l4 4" stroke="#3858a8" strokeWidth="2.2" />
          </Sv>
        </div>
      </div>
    </div>
    <div className="flex h-[24px] shrink-0 items-start border-t border-[#888] bg-[#cfd3dc] pl-[4px]">
      <div className="flex h-[21px] w-[24px] items-center justify-center rounded-b-[3px] border-x border-b border-[#bcd] bg-[#eef0f4]">
        <Sv c="w-[16px] h-[18px]" v="0 0 16 18">
          <rect x="0" y="1" width="7" height="3" fill="#f00" />
          <rect x="0" y="4" width="7" height="3" fill="#fa0" />
          <rect x="0" y="7" width="7" height="3" fill="#0d0" />
          <rect x="0" y="10" width="7" height="3" fill="#0ee" />
          <rect x="0" y="13" width="7" height="3" fill="#00f" />
          <path d="M10 2h4v2h-4zM10 6h4v2h-4zM10 10h4v2h-4zM10 14h4v2h-4z" fill="#888" />
        </Sv>
      </div>
      <div className="ml-[5px] mt-[2px] flex h-[18px] w-[17px] items-center justify-center">
        <Sv c="w-[17px] h-[16px]" v="0 0 17 16">
          <path d="M8.5 1v13M3 14h11M2 3h13" stroke="#a88418" strokeWidth="1.4" />
          <path d="M0 8h6L3 3zM11 8h6l-3-5z" fill="#e8c848" stroke="#806010" strokeWidth=".6" />
        </Sv>
      </div>
      <div className="ml-[13px] mt-[2px] flex h-[18px] w-[17px] items-center justify-center">
        <Sv c="w-[16px] h-[16px]" v="0 0 16 16">
          <path d="M2 13L11 2l3 3-8 8z" fill="#707078" stroke="#222" />
          <path d="M2 15h12" stroke="#222" strokeWidth="2" />
          <path d="M11 8q3 3 1 6" stroke="#222" strokeWidth="1.4" />
        </Sv>
      </div>
    </div>
  </div>
);

const pts = (a: number[][]) => a.map((p) => p.join(',')).join(' ');
// polygon under a boundary, closed round the far side of the beam
const below = (a: number[][]) => pts([...a, [1620, a[a.length - 1][1] - 100], [1620, 420], [780, 420]]);
const under = (a: number[][]) => pts([...a, [a[a.length - 1][0], 420], [780, 420]]);
const right = (a: number[][]) => pts([...a, [840, 724], [840, 300]]);

const Model = () => (
  <svg viewBox="393 100 1213 624" className="absolute inset-0 h-full w-full" shapeRendering="crispEdges">
    <defs>
      <clipPath id="col">
        <polygon points="706,327 728,323 790,330 807,332 817,333 824,385 828,383 828,724 706,724" />
      </clipPath>
      <clipPath id="beam">
        <polygon points="797,287 817,278 1000,256 1606,184 1606,267 1000,350 823,384 815,382 824,375 808,289" />
      </clipPath>
    </defs>
    <g clipPath="url(#col)">
      <rect x="700" y="320" width="135" height="410" fill="#ff0000" />
      <polygon fill="#ffaa00" points={right([[728, 320], [724, 430], [721, 490], [718, 530], [710, 535], [708, 560], [707, 582], [706, 602], [704, 724], [704, 730]])} />
      <polygon fill="#d0d000" points={right([[740, 320], [736, 430], [726, 724]])} />
      <polygon fill="#ffff00" points={right([[750, 320], [748, 430], [741, 724]])} />
      <polygon fill="#00ff00" points={right([[761, 320], [760, 430], [757, 724]])} />
      <polygon fill="#00e080" points={right([[772, 320], [772, 430], [773, 724]])} />
      <polygon fill="#00ffff" points={right([[782, 320], [784, 430], [788, 724]])} />
      <polygon fill="#00a0ff" points="793,320 795,430 799,560 802,660 802,724 840,724 840,320" />
      <rect x="804" y="320" width="30" height="410" fill="#0000ff" />
      <polygon fill="#00a0ff" points="803,620 805,620 805,669 828,662 828,724 803,724" />
      <polygon fill="#00ffff" points="788,724 802,724 802,660 799,560 795,560" />
    </g>
    <path d="M709.5 327V724M802.5 335V724M805.5 335V724" stroke="#000" />
    <polygon fill="#ff0000" points="718,323 732,320 732,323 720,326" />
    <rect x="765" y="325" width="4" height="4" fill="#ff0000" />
    <polygon fill="#0000a0" points="805,336 817,334 822,363 807,370" />
    <g clipPath="url(#beam)">
      <rect x="780" y="170" width="840" height="250" fill="#bb0000" />
      <polygon fill="#ff0000" points={below([[800, 288], [808, 287], [1000, 260], [1085, 246]])} />
      <polygon fill="#ffaa00" points={below([[800, 299], [810, 298], [1000, 272], [1238, 228]])} />
      <polygon fill="#d0d000" points={below([[800, 310], [811, 308], [1000, 280], [1325, 218]])} />
      <polygon fill="#ffff00" points={below([[800, 319], [813, 317], [1000, 289], [1394, 218], [1433, 205]])} />
      <polygon fill="#00ff00" points={below([[800, 329], [815, 327], [1000, 298], [1162, 273], [1387, 242], [1464, 228], [1502, 213], [1522, 202], [1539, 190]])} />
      <polygon fill="#00e080" points={under([[800, 338], [817, 336], [1000, 307], [1166, 283], [1309, 265], [1425, 258], [1483, 259], [1550, 270], [1556, 276]])} />
      <polygon fill="#00ffff" points={under([[800, 347], [818, 345], [1000, 317], [1166, 293], [1309, 285], [1387, 282], [1433, 286], [1442, 295]])} />
      <polygon fill="#00a0ff" points={under([[800, 357], [820, 355], [1000, 327], [1166, 303], [1251, 298], [1309, 298], [1332, 302], [1345, 312]])} />
      <polygon fill="#0000ff" points={under([[800, 367], [823, 364], [1000, 337], [1166, 312], [1197, 310], [1228, 310], [1236, 318]])} />
      <polygon fill="#0000a0" points={under([[800, 376], [824, 373], [1000, 347], [1030, 345]])} />
      <polygon fill="#0000ff" points="810,384 824,381 990,356 990,420 810,420" />
    </g>
    <g stroke="#000" fill="none" shapeRendering="auto">
      <path d="M802 284L990 263M1000 258L1606 188" strokeWidth="1" strokeDasharray="14 2" />
      <path d="M808 289L990 268M1000 261L1606 193" strokeWidth="1" strokeDasharray="6 3" />
      <path d="M818 335L824 380M1158 246L1170 317" strokeWidth="1" strokeDasharray="5 2" />
      <path d="M815 377L1000 348L1170 318L1606 267" strokeWidth="1" strokeDasharray="16 1.5" />
      <path d="M805 336L827 329" strokeWidth="1" strokeDasharray="4 1" />
    </g>
    <rect x="1163" y="278" width="4" height="4" fill="#ff0000" />
  </svg>
);

export default function App() {
  return (
    <div className="flex h-[724px] w-[1606px] overflow-hidden bg-white [font-family:'Noto_Sans',sans-serif]">
      {/* left screen edge */}
      <div className="flex w-[8px] shrink-0 flex-col">
        <div className="h-[20px] bg-[#c8c8c8]" />
        <div className="h-[10px] border-b border-[#bbb] bg-white" />
        <div className="h-[70px] bg-white" />
        <div className="h-[70px] bg-[#cccccc]" />
        <div className="flex-1 bg-[#f0f0f0]" />
      </div>
      <div className="flex min-w-0 flex-1 flex-col">
        {/* title */}
        <div className="flex h-[22px] shrink-0 items-center bg-white">
          <Sv c="ml-[2px] w-[16px] h-[17px]" v="0 0 16 17">
            <path d="M3 6l8-5 4 3v6l-8 5z" fill="#7d9bc4" stroke="#3c5c8c" strokeWidth=".6" />
            <path d="M6 4l3 9M9 2.5l3 9" stroke="#3c5c8c" strokeWidth=".7" />
            <text x="4" y="16" textAnchor="middle" fontSize="11" fontWeight="700" fontFamily="Liberation Sans, sans-serif" fill="#c89a20">5</text>
          </Sv>
          <span className="ml-[789px] whitespace-nowrap text-[14.4px] text-[#333]">RFEM 5.04.0019 (64bit) - [RSTAB-Beispiel-05*]</span>
        </div>
        {/* menu */}
        <div className="flex h-[25px] shrink-0 items-center bg-[#d0d4dc] text-[11px] text-[#3c4452]">
          <span className="ml-[4px] h-[14px] border-l-2 border-dotted border-[#a8aebb]" />
          <Sv c="ml-[4px] w-[16px] h-[13px]" v="0 0 16 13">
            <rect width="16" height="13" fill="#1c3a78" />
            <path d="M1 9h14M8 2L2 9M8 2l6 7M8 2v7M5 9v3M11 9v3" stroke="#fff" strokeWidth="1.1" />
          </Sv>
          <div className="ml-[10px] flex">
            {MENU.map(([a, u, b, w]) => (
              <span key={a + u + b} className={`whitespace-nowrap ${w}`}>
                {a}
                <u>{u}</u>
                {b}
              </span>
            ))}
          </div>
        </div>
        {/* toolbars */}
        <div className="flex h-[25px] shrink-0 gap-[3px] bg-[#d0d4dc]">
          <Bar
            c="w-[865px]"
            items="g10 new open cabA cabB save props print preview |8 undo redo |8 para sel1 sel2 sel3 win |8 *tog1 *tog2 |7 load combo prevA nextA pin xxx *eye *xxxA |7 glasses abac1 abac2"
          />
          <Bar c="w-[326px]" items="g8 hand dots *act pl2 pl3 grid flow |8 nodes rot mirror cross info geard gears" />
          <Bar c="-ml-px w-[98px]" items="g8 dn1 dn2 flag1 flag2" />
        </div>
        <div className="flex h-[26px] shrink-0 gap-[2px] bg-[#d0d4dc]">
          <Bar
            c="w-[638px]"
            items="g9 s1 v14 s2 _2 s3 v12 _1 s4 v12 |7 s5 s6 s7 |10 dim v11 dimx dimbox |11 rect v12 frame2 v14 solid v9 cube _2 cube2 v12 |11 arr v9 down h1 h2 h3 _1 bolt v14"
          />
          <Bar c="w-[307px]" items="g6 hand2 zoomAdd zoomX wire iso |8 vx vy vz _1 vmx v16 scope v9 |10 shape v10" />
          <Bar c="w-[347px]" items="g5 frameS pill |9 *mem surf colC sup slope _2 squares v11 wave table |8 *list _2 wand v13 color v10" />
        </div>
        <div className="h-[2px] shrink-0 bg-[#8c8c8c]" />
        {/* work area */}
        <div className="flex min-h-0 flex-1">
          <div className="flex w-[385px] shrink-0 flex-col bg-[#d0d4dc]">
            <div className="flex h-[18px] shrink-0 items-center justify-between bg-[#eef1f6] pl-[4px] pr-[12px] text-[11px] text-[#444]">
              <span>Projekt-Navigator - Ergebnisse</span>
              <span className="flex items-center gap-[8px]">
                <Sv c="w-[9px] h-[10px]" v="0 0 9 10">
                  <path d="M2.5 1h4v5h-4zM1 6h7M4.5 6v4M5.5 1v5" stroke="#555" />
                </Sv>
                <Sv c="w-[10px] h-[10px]" v="0 0 10 10">
                  <path d="M1 1l8 8M9 1L1 9" stroke="#555" strokeWidth="1.3" />
                </Sv>
              </span>
            </div>
            <div className="relative ml-[2px] mr-[9px] min-h-0 flex-1 bg-[#fcfcf5] pl-[2.5px] pt-[4px]">
              {ROWS.map((r, i) => (
                <TreeRow key={i} r={r} i={i} />
              ))}
              <div className="absolute left-[2px] top-[20px] h-[22px] w-[98px] border-[3px] border-[#ff0000] shadow-[3px_3px_5px_rgba(60,60,40,0.55)]" />
              <div className="absolute left-[20px] top-[287px] h-[78px] w-[140px] border-[3px] border-[#ff0000] shadow-[3px_3px_5px_rgba(60,60,40,0.55)]" />
            </div>
          </div>
          <div className="relative min-w-0 flex-1 bg-black">
            <Model />
            <div className="absolute left-[4px] top-[6px] text-[11px] leading-[14px] text-[#f4f4f4] [font-family:'Liberation_Sans',sans-serif]">
              <div>Sichtbarkeitsmodus</div>
              <div className="pl-[3px] tracking-[-0.3px]">Sigma-x [kN/cm^2]</div>
              <div className="tracking-[-0.2px]">LK1 : 1.35*LF1 + LF13</div>
            </div>
            <Panel />
            <div className="absolute bottom-[5px] left-[4px] text-[11px] leading-[14px] tracking-[-0.2px] text-[#f4f4f4] [font-family:'Liberation_Sans',sans-serif]">
              Max Sigma-x: 5.27, Min Sigma-x: -5.69 kN/cm^2
            </div>
          </div>
        </div>
      </div>
    </div>
  );
}
